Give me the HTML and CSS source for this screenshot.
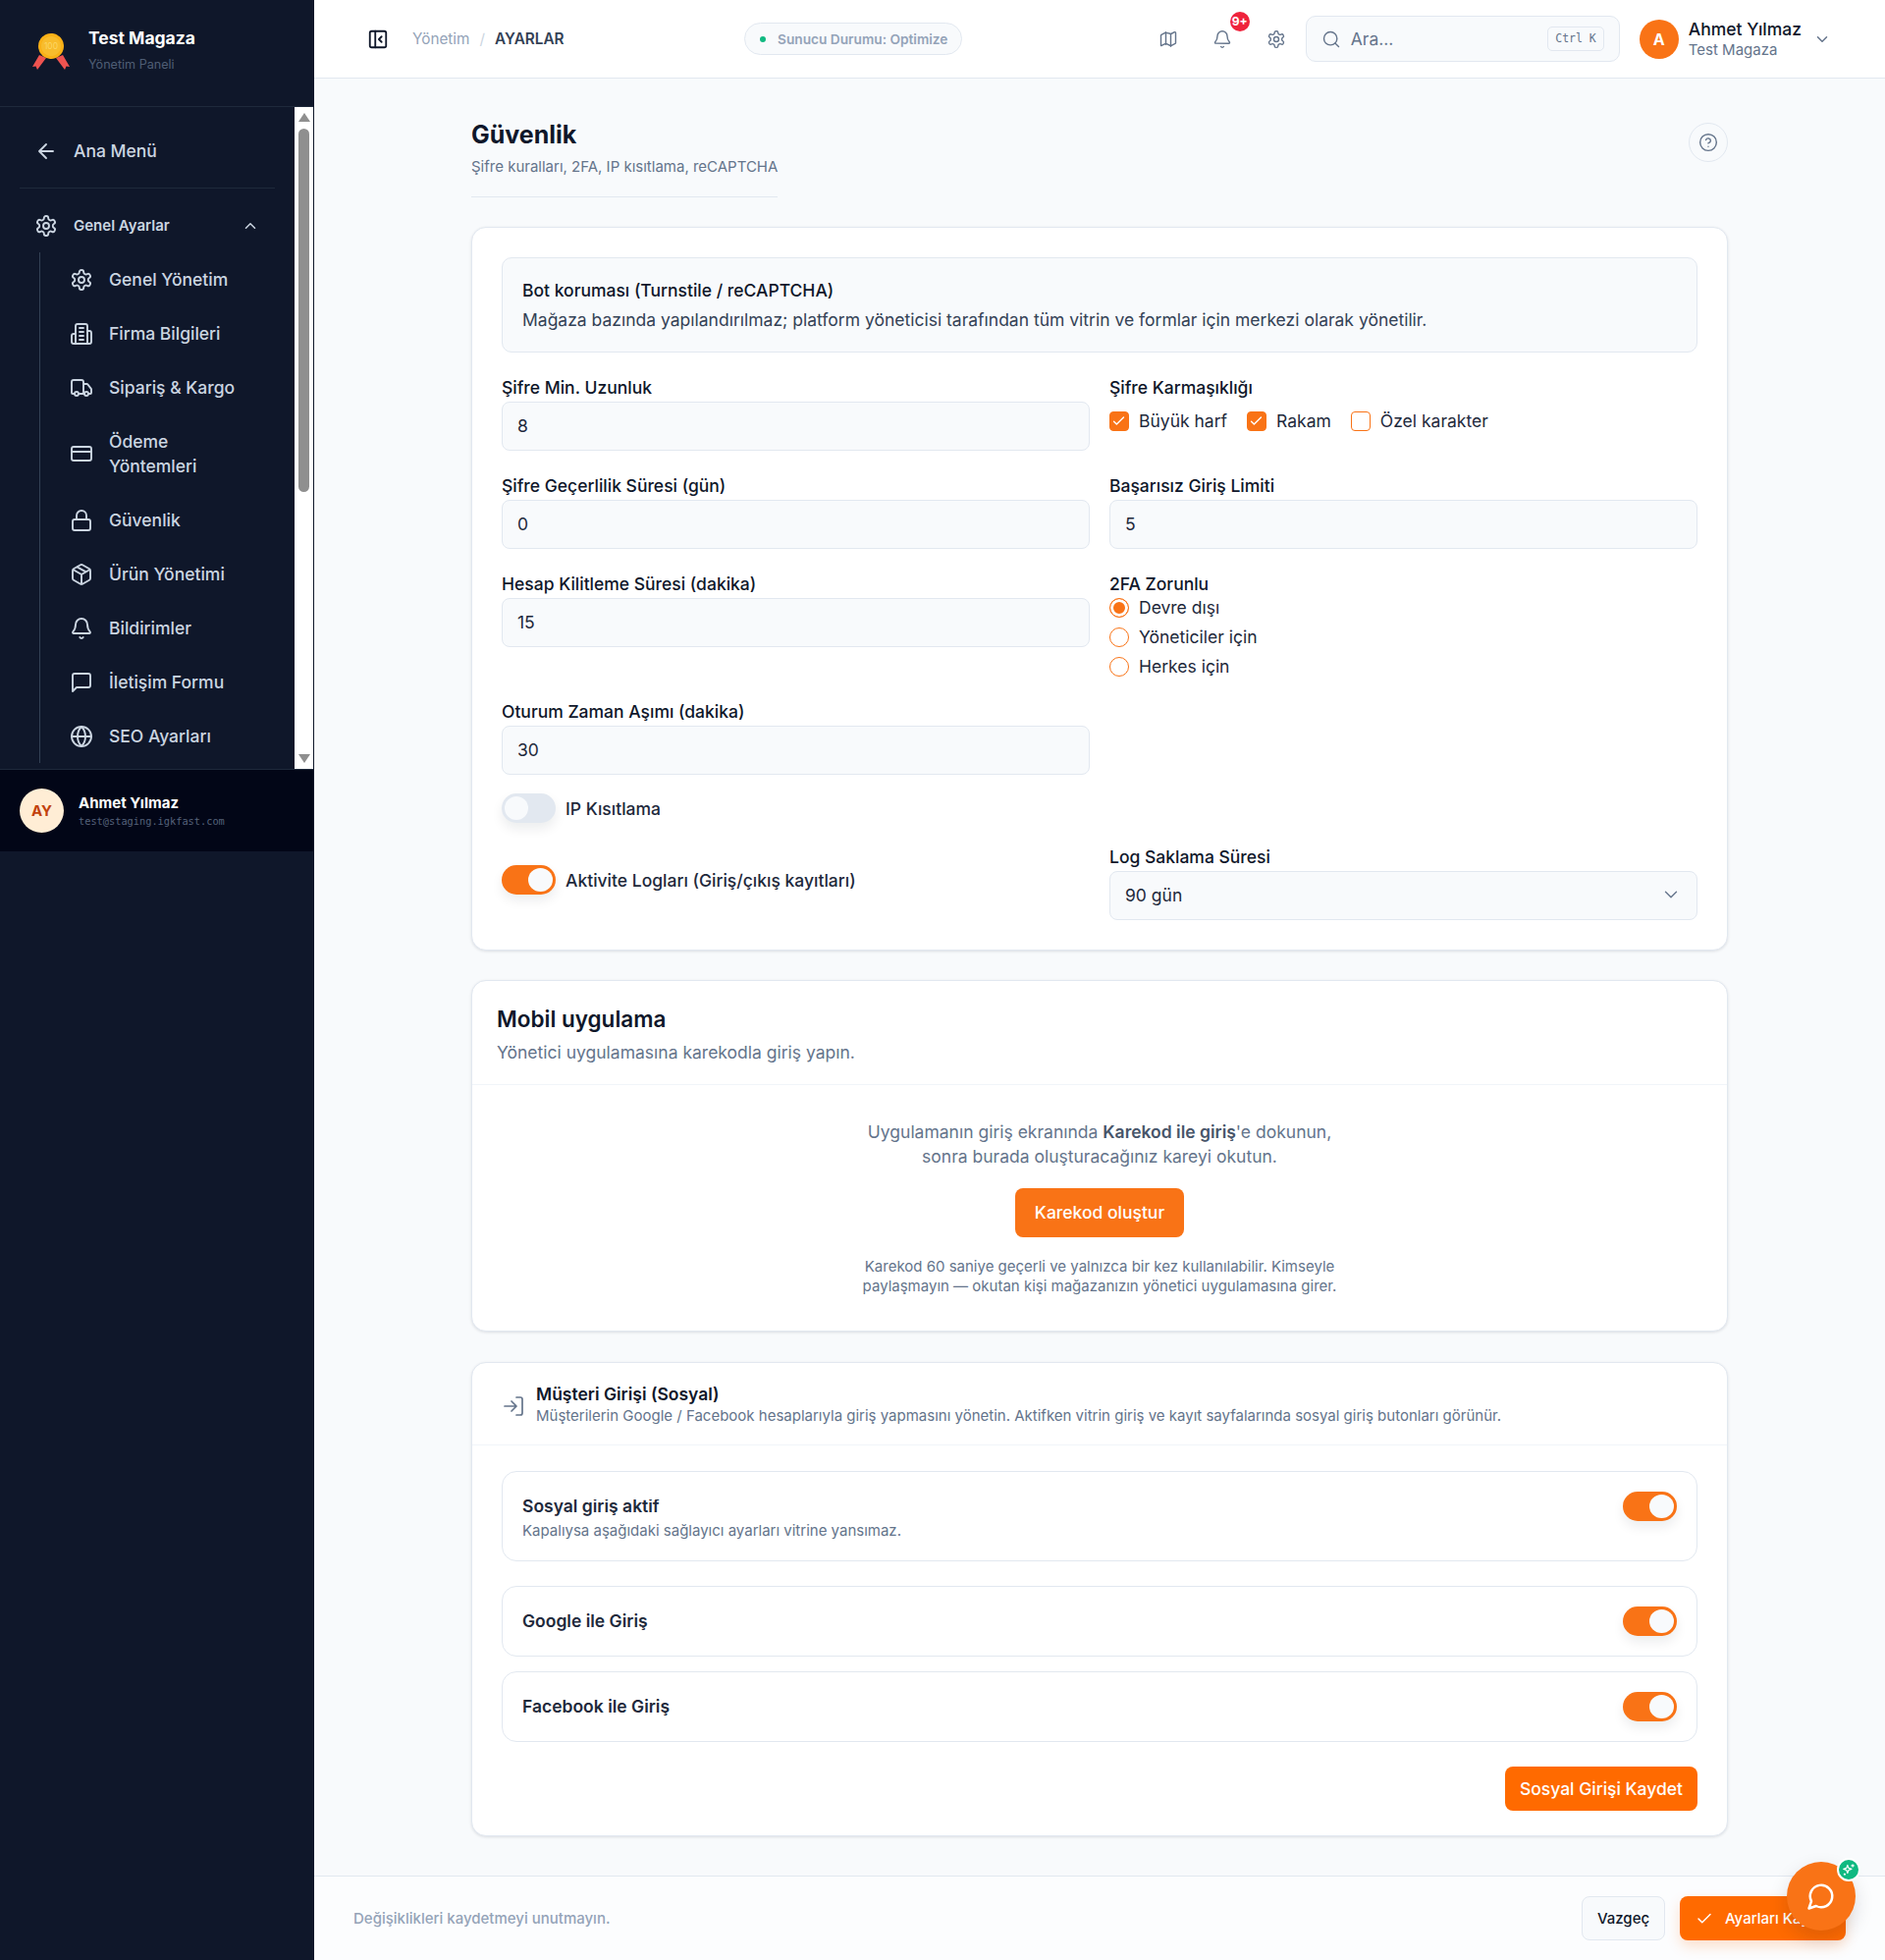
FILE: index.html
```html
<!DOCTYPE html>
<html lang="tr">
<head>
  <meta charset="UTF-8">
  <title>Güvenlik - Ayarlar</title>
  <link rel="stylesheet" href="styles.css">
</head>
<body>

<div class="app">

  <aside class="sidebar">
    <div class="side-panel">
      <div class="brand">
        <svg class="brand-logo" viewBox="0 0 44 44" width="44" height="44">
          <path d="M10 25 L17 28 L8 40 L6.500 36.500 L3 37Z" fill="#ef5350"/>
          <path d="M34 25 L27 28 L36 40 L37.500 36.500 L41 37Z" fill="#ef5350"/>
          <circle cx="22" cy="16" r="11.500" fill="#f8bc2c" stroke="#f9b017" stroke-width="3" stroke-dasharray="3.500 1.200"/>
          <text class="logo-text" x="22" y="19" text-anchor="middle">100</text>
        </svg>
        <div>
          <div class="brand-name">Test Magaza</div>
          <div class="brand-sub">Yönetim Paneli</div>
        </div>
      </div>

      <div class="side-scroll">
        <nav class="side-nav">
          <a class="back-link">
            <svg class="ic-side" viewBox="0 0 24 24"><path d="M19 12H5M12 19l-7-7 7-7"/></svg>
            Ana Menü
          </a>
          <div class="side-sep"></div>
          <div class="group-head">
            <svg class="ic-side" viewBox="0 0 24 24"><use href="#gear"/></svg>
            <span class="group-title">Genel Ayarlar</span>
            <svg class="group-chev" viewBox="0 0 24 24"><path d="M6 15l6-6 6 6"/></svg>
          </div>
          <div class="sub-list">
            <a class="sub-item"><svg class="ic-side" viewBox="0 0 24 24"><use href="#gear"/></svg>Genel Yönetim</a>
            <a class="sub-item"><svg class="ic-side" viewBox="0 0 24 24"><path d="M6 22V4a2 2 0 0 1 2-2h8a2 2 0 0 1 2 2v18ZM6 12H4a2 2 0 0 0-2 2v6a2 2 0 0 0 2 2h2M18 9h2a2 2 0 0 1 2 2v9a2 2 0 0 1-2 2h-2M10 6h4M10 10h4M10 14h4M10 18h4"/></svg>Firma Bilgileri</a>
            <a class="sub-item"><svg class="ic-side" viewBox="0 0 24 24"><path d="M14 18V6a2 2 0 0 0-2-2H4a2 2 0 0 0-2 2v11a1 1 0 0 0 1 1h2M15 18H9M19 18h2a1 1 0 0 0 1-1v-3.600a1 1 0 0 0-.2-.6l-3.500-4.400a1 1 0 0 0-.8-.4H14"/><circle cx="17" cy="18" r="2"/><circle cx="7" cy="18" r="2"/></svg>Sipariş &amp; Kargo</a>
            <a class="sub-item"><svg class="ic-side" viewBox="0 0 24 24"><rect x="2" y="5" width="20" height="14" rx="2"/><path d="M2 10h20"/></svg>Ödeme Yöntemleri</a>
            <a class="sub-item"><svg class="ic-side" viewBox="0 0 24 24"><rect x="3" y="11" width="18" height="11" rx="2"/><path d="M7 11V7a5 5 0 0 1 10 0v4"/></svg>Güvenlik</a>
            <a class="sub-item"><svg class="ic-side" viewBox="0 0 24 24"><path d="M21 8a2 2 0 0 0-1-1.700l-7-4a2 2 0 0 0-2 0l-7 4A2 2 0 0 0 3 8v8a2 2 0 0 0 1 1.700l7 4a2 2 0 0 0 2 0l7-4a2 2 0 0 0 1-1.700ZM12 22V12M3.300 7 12 12l8.700-5M7.500 4.300l9 5.100"/></svg>Ürün Yönetimi</a>
            <a class="sub-item"><svg class="ic-side" viewBox="0 0 24 24"><use href="#bell"/></svg>Bildirimler</a>
            <a class="sub-item"><svg class="ic-side" viewBox="0 0 24 24"><path d="M21 15a2 2 0 0 1-2 2H7l-4 4V5a2 2 0 0 1 2-2h14a2 2 0 0 1 2 2z"/></svg>İletişim Formu</a>
            <a class="sub-item"><svg class="ic-side" viewBox="0 0 24 24"><circle cx="12" cy="12" r="10"/><path d="M12 2a14.500 14.500 0 0 0 0 20 14.500 14.500 0 0 0 0-20M2 12h20"/></svg>SEO Ayarları</a>
          </div>
        </nav>
        <div class="fake-scrollbar">
          <span class="arrow-up"></span>
          <span class="thumb"></span>
          <span class="arrow-down"></span>
        </div>
      </div>

      <div class="side-user">
        <div class="side-avatar">AY</div>
        <div>
          <div class="side-user-name">Ahmet Yılmaz</div>
          <div class="side-user-mail">test@staging.igkfast.com</div>
        </div>
      </div>
    </div>
  </aside>

  <div class="main">
    <header class="topbar">
      <svg class="collapse-ic" viewBox="0 0 24 24"><rect x="3" y="3" width="18" height="18" rx="2"/><path d="M9 3v18M16 15l-3-3 3-3"/></svg>
      <div class="crumbs"><span class="crumb-muted">Yönetim</span><span class="crumb-slash">/</span><span class="crumb-cur">AYARLAR</span></div>
      <div class="status-pill"><span class="status-dot"></span>Sunucu Durumu: Optimize</div>
      <div class="top-icons">
        <svg class="ic-top" viewBox="0 0 24 24"><path d="M14.100 5.100a2 2 0 0 0 1.800 0l3.700-1.900A1 1 0 0 1 21 4.100v12.300a1 1 0 0 1-.6.9l-4.500 2.300a2 2 0 0 1-1.800 0l-4.200-2.100a2 2 0 0 0-1.800 0l-3.700 1.900A1 1 0 0 1 3 19.600V7.300a1 1 0 0 1 .6-.9l4.500-2.300a2 2 0 0 1 1.800 0zM15 5.800v15M9 3.200v15"/></svg>
        <div class="bell-wrap">
          <svg class="ic-top" viewBox="0 0 24 24"><use href="#bell"/></svg>
          <span class="bell-badge">9+</span>
        </div>
        <svg class="ic-top" viewBox="0 0 24 24"><use href="#gear"/></svg>
      </div>
      <div class="top-search">
        <svg class="ic-search" viewBox="0 0 24 24"><circle cx="11" cy="11" r="8"/><path d="m21 21-4.300-4.300"/></svg>
        <span class="search-text">Ara...</span>
        <span class="kbd">Ctrl K</span>
      </div>
      <div class="top-user">
        <div class="top-avatar">A</div>
        <div>
          <div class="top-user-name">Ahmet Yılmaz</div>
          <div class="top-user-shop">Test Magaza</div>
        </div>
        <svg class="top-chev" viewBox="0 0 24 24"><path d="m6 9 6 6 6-6"/></svg>
      </div>
    </header>

    <main class="content">
      <div class="page-head">
        <div>
          <h1>Güvenlik</h1>
          <p class="page-sub">Şifre kuralları, 2FA, IP kısıtlama, reCAPTCHA</p>
        </div>
        <button class="help-btn">
          <svg viewBox="0 0 24 24"><circle cx="12" cy="12" r="10"/><path d="M9.100 9a3 3 0 0 1 5.800 1c0 2-3 3-3 3M12 17h0"/></svg>
        </button>
      </div>

      <section class="card card-form">
        <div class="info-box">
          <div class="info-title">Bot koruması (Turnstile / reCAPTCHA)</div>
          <div>Mağaza bazında yapılandırılmaz; platform yöneticisi tarafından tüm vitrin ve formlar için merkezi olarak yönetilir.</div>
        </div>

        <div class="form-grid">
          <div class="field">
            <label>Şifre Min. Uzunluk</label>
            <input class="text-input" type="text" value="8">
          </div>
          <div class="field">
            <label>Şifre Karmaşıklığı</label>
            <div class="check-row">
              <span class="check-item"><span class="check on"><svg viewBox="0 0 24 24"><path d="M5 13l4 4L19 7"/></svg></span>Büyük harf</span>
              <span class="check-item"><span class="check on"><svg viewBox="0 0 24 24"><path d="M5 13l4 4L19 7"/></svg></span>Rakam</span>
              <span class="check-item"><span class="check"></span>Özel karakter</span>
            </div>
          </div>
          <div class="field">
            <label>Şifre Geçerlilik Süresi (gün)</label>
            <input class="text-input" type="text" value="0">
          </div>
          <div class="field">
            <label>Başarısız Giriş Limiti</label>
            <input class="text-input" type="text" value="5">
          </div>
          <div class="field">
            <label>Hesap Kilitleme Süresi (dakika)</label>
            <input class="text-input" type="text" value="15">
          </div>
          <div class="field field-radio">
            <label>2FA Zorunlu</label>
            <div class="radio-item"><span class="radio on"></span>Devre dışı</div>
            <div class="radio-item"><span class="radio"></span>Yöneticiler için</div>
            <div class="radio-item"><span class="radio"></span>Herkes için</div>
          </div>
          <div class="field">
            <label>Oturum Zaman Aşımı (dakika)</label>
            <input class="text-input" type="text" value="30">
          </div>
          <div class="field"></div>
        </div>

        <div class="toggle-line toggle-ip">
          <span class="toggle"></span>IP Kısıtlama
        </div>

        <div class="log-row">
          <div class="toggle-line">
            <span class="toggle on"></span>Aktivite Logları (Giriş/çıkış kayıtları)
          </div>
          <div class="field">
            <label>Log Saklama Süresi</label>
            <div class="select-box">90 gün
              <svg viewBox="0 0 24 24"><path d="m6 9 6 6 6-6"/></svg>
            </div>
          </div>
        </div>
      </section>

      <section class="card card-mobile">
        <div class="mobile-head">
          <h2>Mobil uygulama</h2>
          <p>Yönetici uygulamasına karekodla giriş yapın.</p>
        </div>
        <div class="mobile-body">
          <p class="mobile-lead">Uygulamanın giriş ekranında <b>Karekod ile giriş</b>'e dokunun,<br>sonra burada oluşturacağınız kareyi okutun.</p>
          <button class="btn-orange btn-qr">Karekod oluştur</button>
          <p class="mobile-note">Karekod 60 saniye geçerli ve yalnızca bir kez kullanılabilir. Kimseyle<br>paylaşmayın — okutan kişi mağazanızın yönetici uygulamasına girer.</p>
        </div>
      </section>

      <section class="card card-social">
        <div class="social-head">
          <svg viewBox="0 0 24 24"><path d="M15 3h4a2 2 0 0 1 2 2v14a2 2 0 0 1-2 2h-4M10 17l5-5-5-5M15 12H3"/></svg>
          <div>
            <h3>Müşteri Girişi (Sosyal)</h3>
            <p>Müşterilerin Google / Facebook hesaplarıyla giriş yapmasını yönetin. Aktifken vitrin giriş ve kayıt sayfalarında sosyal giriş butonları görünür.</p>
          </div>
        </div>
        <div class="social-body">
          <div class="social-item social-item-tall">
            <div>
              <div class="social-title">Sosyal giriş aktif</div>
              <div class="social-desc">Kapalıysa aşağıdaki sağlayıcı ayarları vitrine yansımaz.</div>
            </div>
            <span class="toggle on"></span>
          </div>
          <div class="social-item">
            <div class="social-title">Google ile Giriş</div>
            <span class="toggle on"></span>
          </div>
          <div class="social-item">
            <div class="social-title">Facebook ile Giriş</div>
            <span class="toggle on"></span>
          </div>
          <div class="social-actions">
            <button class="btn-orange btn-social">Sosyal Girişi Kaydet</button>
          </div>
        </div>
      </section>
    </main>

    <footer class="save-bar">
      <span class="save-note">Değişiklikleri kaydetmeyi unutmayın.</span>
      <button class="btn-cancel">Vazgeç</button>
      <button class="btn-orange btn-save">
        <svg viewBox="0 0 24 24"><path d="M20 6 9 17l-5-5"/></svg>
        Ayarları Kaydet
      </button>
    </footer>
  </div>
</div>

<button class="chat-fab">
  <svg viewBox="0 0 24 24"><path d="M7.900 20A9 9 0 1 0 4 16.100L2 22Z"/></svg>
  <span class="chat-badge">
    <svg viewBox="0 0 24 24"><path d="M10 4l1.800 5.200L17 11l-5.200 1.800L10 18l-1.800-5.200L3 11l5.200-1.800zM19 3v4M21 5h-4M5 19v2M6 20H4"/></svg>
  </span>
</button>

<!-- shared icons -->
<svg class="icon-defs" width="0" height="0">
  <defs>
    <g id="gear">
      <path d="M12.200 2h-.4a2 2 0 0 0-2 2v.2a2 2 0 0 1-1 1.700l-.4.3a2 2 0 0 1-2 0l-.2-.1a2 2 0 0 0-2.700.7l-.2.4a2 2 0 0 0 .7 2.700l.2.1a2 2 0 0 1 1 1.700v.5a2 2 0 0 1-1 1.800l-.2.1a2 2 0 0 0-.7 2.700l.2.4a2 2 0 0 0 2.700.7l.2-.1a2 2 0 0 1 2 0l.4.3a2 2 0 0 1 1 1.700v.2a2 2 0 0 0 2 2h.4a2 2 0 0 0 2-2v-.2a2 2 0 0 1 1-1.700l.4-.3a2 2 0 0 1 2 0l.2.1a2 2 0 0 0 2.700-.7l.2-.4a2 2 0 0 0-.7-2.700l-.2-.1a2 2 0 0 1-1-1.800v-.5a2 2 0 0 1 1-1.700l.2-.1a2 2 0 0 0 .7-2.700l-.2-.4a2 2 0 0 0-2.700-.7l-.2.1a2 2 0 0 1-2 0l-.4-.3a2 2 0 0 1-1-1.700V4a2 2 0 0 0-2-2z"/>
      <circle cx="12" cy="12" r="3"/>
    </g>
    <g id="bell">
      <path d="M10.300 21a2 2 0 0 0 3.400 0M3.300 15.300A1 1 0 0 0 4 17h16a1 1 0 0 0 .7-1.700C19.400 14 18 12.500 18 8A6 6 0 0 0 6 8c0 4.500-1.400 6-2.700 7.300"/>
    </g>
  </defs>
</svg>

</body>
</html>
```

FILE: styles.css
```css
* {
  box-sizing: border-box;
}
html, body {
  margin: 0;
  padding: 0;
}
body {
  font-family: Inter, "Noto Sans", sans-serif;
  background: #f8fafc;
  color: #0f172a;
  width: 1920px;
  height: 1996px;
  overflow: hidden;
  position: relative;
}
svg {
  fill: none;
  stroke: currentColor;
  stroke-width: 2;
  stroke-linecap: round;
  stroke-linejoin: round;
  flex-shrink: 0;
}
h1, h2, h3, p {
  margin: 0;
}
button,
input {
  font-family: inherit;
}
button {
  cursor: pointer;
}
.icon-defs {
  position: absolute;
}

.app {
  display: flex;
  height: 1996px;
}

/* sidebar */
.sidebar {
  width: 320px;
  flex-shrink: 0;
  background: #0f172a;
}
.side-panel {
  height: 867px;
  display: flex;
  flex-direction: column;
  width: 319px;
}
.brand {
  height: 109px;
  display: flex;
  align-items: center;
  gap: 16px;
  padding: 0 0 8px 30px;
  border-bottom: 1px solid #1e293b;
  flex-shrink: 0;
}
.brand-logo {
  stroke: none;
  width: 44px;
  height: 44px;
  margin-top: 6px;
}
.logo-text {
  font-size: 8.500px;
  fill: #fcd663;
  stroke: none;
}
.brand-name {
  font-size: 17.500px;
  font-weight: 700;
  color: #fff;
  line-height: 24px;
}
.brand-sub {
  font-size: 12.600px;
  color: #4f5e75;
  margin-top: 7px;
  line-height: 16px;
}
.side-scroll {
  flex: 1;
  display: flex;
  min-height: 0;
}
.side-nav {
  flex: 1;
  padding: 17px 20px 0;
  min-width: 0;
  overflow: hidden;
}
.fake-scrollbar {
  width: 19px;
  background: #fff;
  display: flex;
  flex-direction: column;
  align-items: center;
  padding-top: 6px;
}
.thumb {
  width: 11px;
  height: 370px;
  background: #8f8f8f;
  border-radius: 6px;
  margin-top: 7px;
}
.arrow-up {
  width: 0;
  height: 0;
  border-left: 6px solid transparent;
  border-right: 6px solid transparent;
  border-bottom: 9px solid #8f8f8f;
}
.arrow-down {
  width: 0;
  height: 0;
  border-left: 6px solid transparent;
  border-right: 6px solid transparent;
  border-top: 9px solid #8f8f8f;
  margin-top: auto;
  margin-bottom: 6px;
}
.ic-side {
  width: 24px;
  height: 24px;
  color: #cbd5e1;
  stroke-width: 1.900;
}
.back-link {
  display: flex;
  align-items: center;
  gap: 16px;
  height: 55px;
  padding-left: 15px;
  font-size: 17.500px;
  font-weight: 500;
  color: #cbd5e1;
}
.side-sep {
  height: 1px;
  background: #1e293b;
  margin-top: 10px;
}
.group-head {
  display: flex;
  align-items: center;
  gap: 16px;
  height: 55px;
  margin-top: 10px;
  padding-left: 15px;
}
.group-title {
  font-size: 15px;
  font-weight: 600;
  color: #cbd5e1;
  flex: 1;
}
.group-chev {
  width: 18px;
  height: 18px;
  color: #cbd5e1;
  margin-right: 16px;
}
.sub-list {
  margin-left: 20px;
  padding-left: 30px;
  border-left: 1px solid #334155;
  padding-right: 20px;
}
.sub-item {
  display: flex;
  align-items: center;
  gap: 16px;
  padding: 15px 0;
  font-size: 17.500px;
  line-height: 25px;
  font-weight: 500;
  color: #cbd5e1;
}
.side-user {
  height: 84px;
  background: #020617;
  border-top: 1px solid #1e293b;
  display: flex;
  align-items: center;
  gap: 15px;
  padding-left: 20px;
  flex-shrink: 0;
}
.side-avatar {
  width: 45px;
  height: 45px;
  border-radius: 50%;
  background: #ffedd5;
  color: #c2410c;
  font-size: 15px;
  font-weight: 700;
  display: flex;
  align-items: center;
  justify-content: center;
}
.side-user-name {
  font-size: 15px;
  font-weight: 700;
  color: #fff;
  line-height: 20px;
}
.side-user-mail {
  font-family: "DejaVu Sans Mono", monospace;
  font-size: 10.300px;
  color: #55627a;
  line-height: 14px;
  margin-top: 1px;
}

/* top bar */
.main {
  flex: 1;
  min-width: 0;
  display: flex;
  flex-direction: column;
}
.topbar {
  height: 80px;
  background: #fff;
  border-bottom: 1px solid #e2e8f0;
  display: flex;
  align-items: center;
  padding: 0 55px 0 54px;
  flex-shrink: 0;
}
.collapse-ic {
  width: 22px;
  height: 22px;
  color: #0f172a;
}
.crumbs {
  display: flex;
  align-items: center;
  font-size: 15.300px;
  margin-left: 24px;
  width: 338px;
}
.crumb-muted {
  color: #94a3b8;
}
.crumb-slash {
  color: #cbd5e1;
  margin: 0 10px;
}
.crumb-cur {
  font-weight: 600;
  color: #334155;
}
.status-pill {
  display: flex;
  align-items: center;
  gap: 12px;
  height: 33px;
  padding: 0 14px 0 15px;
  background: #f8fafc;
  border: 1px solid #e2e8f0;
  border-radius: 17px;
  font-size: 13.700px;
  font-weight: 600;
  color: #94a3b8;
}
.status-dot {
  width: 6px;
  height: 6px;
  border-radius: 50%;
  background: #10b981;
}
.top-icons {
  display: flex;
  align-items: center;
  gap: 35px;
  margin-left: auto;
}
.ic-top {
  width: 20px;
  height: 20px;
  color: #64748b;
  display: block;
  stroke-width: 1.700;
}
.bell-wrap {
  position: relative;
}
.bell-badge {
  position: absolute;
  top: -18px;
  right: -18px;
  width: 20px;
  height: 20px;
  border-radius: 50%;
  background: #ef233c;
  color: #fff;
  font-size: 12px;
  font-weight: 700;
  display: flex;
  align-items: center;
  justify-content: center;
}
.top-search {
  width: 320px;
  height: 47px;
  margin-left: 20px;
  background: #f8fafc;
  border: 1px solid #e2e8f0;
  border-radius: 10px;
  display: flex;
  align-items: center;
  padding: 0 15px;
}
.ic-search {
  width: 20px;
  height: 20px;
  color: #64748b;
  stroke-width: 1.700;
}
.search-text {
  font-size: 17.500px;
  color: #64748b;
  margin-left: 10px;
  flex: 1;
}
.kbd {
  font-family: "DejaVu Sans Mono", monospace;
  font-size: 11.500px;
  color: #64748b;
  height: 25px;
  line-height: 23px;
  padding: 0 7px;
  background: #f8fafc;
  border: 1px solid #e2e8f0;
  border-radius: 5px;
}
.top-user {
  display: flex;
  align-items: center;
  margin-left: 20px;
}
.top-avatar {
  width: 40px;
  height: 40px;
  border-radius: 50%;
  background: #f97316;
  color: #fff;
  font-size: 16px;
  font-weight: 700;
  display: flex;
  align-items: center;
  justify-content: center;
  margin-right: 10px;
}
.top-user-name {
  font-size: 17.500px;
  font-weight: 500;
  color: #0f172a;
  line-height: 23px;
}
.top-user-shop {
  font-size: 15px;
  color: #64748b;
  line-height: 20px;
}
.top-chev {
  width: 18px;
  height: 18px;
  color: #64748b;
  margin-left: 12px;
}

/* page */
.content {
  flex: 1;
  padding: 40px 160px 0;
  min-height: 0;
}
.page-head {
  display: flex;
  justify-content: space-between;
  align-items: flex-start;
  height: 111px;
}
.page-head h1 {
  font-size: 25px;
  font-weight: 700;
  line-height: 34px;
  color: #0f172a;
}
.page-sub {
  font-size: 15px;
  color: #64748b;
  line-height: 22px;
  margin-top: 5px;
  padding-bottom: 19px;
  border-bottom: 1px solid #e2e8f0;
}
.help-btn {
  width: 40px;
  height: 40px;
  margin-top: 5px;
  border-radius: 50%;
  border: 1px solid #e2e8f0;
  background: #f8fafc;
  padding: 0;
  color: #64748b;
  display: flex;
  align-items: center;
  justify-content: center;
}
.help-btn svg {
  width: 20px;
  height: 20px;
  stroke-width: 1.700;
}
.card {
  background: #fff;
  border: 1px solid #e2e8f0;
  border-radius: 15px;
  box-shadow: 0 1px 3px rgba(15, 23, 42, 0.12);
}
.card-form {
  padding: 30px;
  height: 737px;
}
.info-box {
  background: #f8fafc;
  border: 1px solid #e2e8f0;
  border-radius: 10px;
  padding: 18px 20px 0;
  font-size: 17.500px;
  line-height: 29.500px;
  color: #334155;
  height: 97px;
}
.info-title {
  color: #0f172a;
  font-weight: 500;
}
.form-grid {
  display: grid;
  grid-template-columns: 1fr 1fr;
  gap: 0 20px;
  margin-top: 24px;
}
.field {
  height: 100px;
}
.field-radio {
  height: 130px;
}
.field label {
  display: block;
  font-size: 17.500px;
  font-weight: 500;
  line-height: 24px;
  color: #0f172a;
  height: 24px;
  margin-bottom: 2px;
}
.text-input,
.select-box {
  width: 100%;
  height: 50px;
  background: #f8fafc;
  border: 1px solid #e2e8f0;
  border-radius: 8px;
  padding: 0 15px 2px;
  font-family: inherit;
  font-size: 17.500px;
  color: #1e293b;
}
.select-box {
  display: flex;
  align-items: center;
  justify-content: space-between;
}
.select-box svg {
  width: 22px;
  height: 22px;
  color: #64748b;
  stroke-width: 1.500;
}
.check-row {
  display: flex;
  gap: 20px;
  margin-top: 10px;
}
.check-item {
  display: flex;
  align-items: center;
  gap: 10px;
  font-size: 17.500px;
  color: #1e293b;
  line-height: 24px;
}
.check {
  width: 20px;
  height: 20px;
  border: 1.500px solid #f97316;
  border-radius: 4px;
  background: #fff;
  display: block;
}
.check.on {
  background: #f97316;
}
.check svg {
  display: block;
  width: 17px;
  height: 17px;
  color: #fff;
  stroke-width: 2;
}
.radio-item {
  display: flex;
  align-items: center;
  gap: 10px;
  font-size: 17.500px;
  line-height: 24px;
  height: 30px;
  color: #1e293b;
}
.field-radio label {
  height: 21px;
  margin-bottom: 0;
}
.radio {
  width: 20px;
  height: 20px;
  border: 1.500px solid #f97316;
  border-radius: 50%;
  background: #fff;
  display: block;
}
.radio.on {
  box-shadow: inset 0 0 0 3px #fff;
  background: #f97316;
}
.toggle-line {
  display: flex;
  align-items: center;
  gap: 10px;
  font-size: 17.500px;
  font-weight: 500;
  color: #1e293b;
  height: 30px;
}
.toggle-ip {
  margin-top: -5px;
}
.toggle {
  position: relative;
  width: 55px;
  height: 30px;
  border-radius: 15px;
  background: #e2e8f0;
  display: block;
  flex-shrink: 0;
  box-shadow: 0 6px 12px rgba(15, 23, 42, 0.08);
}
.toggle::after {
  content: "";
  position: absolute;
  left: 3px;
  top: 3px;
  width: 24px;
  height: 24px;
  border-radius: 50%;
  background: #f8fafc;
}
.toggle.on {
  background: #f97316;
}
.toggle.on::after {
  left: 27px;
  width: 25px;
}
.log-row {
  display: grid;
  grid-template-columns: 1fr 1fr;
  gap: 0 20px;
  margin-top: 23px;
  align-items: start;
}
.log-row .toggle-line {
  margin-top: 20px;
}

/* mobile card */
.card-mobile {
  margin-top: 30px;
  height: 358px;
}
.mobile-head {
  height: 106px;
  padding: 23px 25px 0;
  border-bottom: 1px solid #f1f5f9;
}
.mobile-head h2 {
  font-size: 22.500px;
  font-weight: 600;
  line-height: 32px;
  color: #0f172a;
}
.mobile-head p {
  font-size: 17.500px;
  color: #64748b;
  line-height: 26px;
  margin-top: 5px;
}
.mobile-body {
  text-align: center;
  padding-top: 35px;
}
.mobile-lead {
  font-size: 17.500px;
  line-height: 25px;
  color: #64748b;
}
.mobile-lead b {
  font-weight: 600;
  color: #475569;
}
.btn-orange {
  background: #ff6a00;
  color: #fff;
  border: 0;
  border-radius: 8px;
  font-weight: 500;
}
.btn-qr {
  width: 172px;
  height: 50px;
  font-size: 17.500px;
  margin-top: 20px;
  padding-bottom: 2px;
  display: inline-block;
  background: #f97316;
}
.mobile-note {
  font-size: 15px;
  line-height: 20px;
  color: #64748b;
  margin-top: 20px;
}

/* social card */
.card-social {
  margin-top: 31px;
  height: 483px;
}
.social-head {
  height: 84px;
  display: flex;
  align-items: center;
  gap: 11px;
  padding: 0 25px 2px 30px;
  border-bottom: 1px solid #f1f5f9;
}
.social-head svg {
  width: 24px;
  height: 24px;
  color: #64748b;
  stroke-width: 1.700;
  margin-top: 7px;
}
.social-head h3 {
  font-size: 17.500px;
  font-weight: 600;
  line-height: 24px;
  color: #0f172a;
  padding-top: 2px;
}
.social-head p {
  font-size: 15px;
  line-height: 20px;
  color: #64748b;
}
.social-body {
  padding: 26px 30px 0;
}
.social-item {
  height: 72px;
  border: 1px solid #e2e8f0;
  border-radius: 15px;
  padding: 0 20px;
  display: flex;
  align-items: center;
  justify-content: space-between;
  margin-bottom: 15px;
}
.social-item-tall {
  height: 92px;
  margin-bottom: 25px;
  align-items: flex-start;
  padding-top: 28px;
}
.social-item-tall .toggle {
  margin-top: -8px;
}
.social-title {
  font-size: 17.500px;
  font-weight: 600;
  line-height: 24px;
  color: #1e293b;
}
/* the title line is too short in the original, the tops of the letters get cut */
.social-item-tall .social-title {
  line-height: 13px;
  height: 18px;
  overflow: hidden;
}
.social-desc {
  font-size: 15px;
  line-height: 20px;
  color: #64748b;
  margin-top: 4px;
}
.social-actions {
  display: flex;
  justify-content: flex-end;
  margin-top: 25px;
}
.btn-social {
  width: 196px;
  height: 45px;
  font-size: 17.500px;
}

/* bottom save bar */
.save-bar {
  height: 86px;
  flex-shrink: 0;
  background: #fcfdfe;
  border-top: 1px solid #e2e8f0;
  display: flex;
  align-items: center;
  padding: 0 40px;
}
.save-note {
  font-size: 15px;
  font-weight: 500;
  color: #94a3b8;
  flex: 1;
}
.btn-cancel {
  width: 85px;
  height: 45px;
  background: #f8fafc;
  border: 1px solid #e2e8f0;
  border-radius: 8px;
  font-size: 15px;
  font-weight: 500;
  color: #0f172a;
}
.btn-save {
  width: 169px;
  height: 45px;
  margin-left: 15px;
  font-size: 15px;
  display: flex;
  align-items: center;
  gap: 12px;
  padding: 0 16px;
  white-space: nowrap;
  overflow: hidden;
  box-shadow: 0 6px 14px rgba(255, 106, 0, 0.2);
}
.btn-save svg {
  width: 18px;
  height: 18px;
}

/* floating chat */
.chat-fab {
  position: absolute;
  left: 1820px;
  top: 1896px;
  width: 70px;
  height: 70px;
  border-radius: 50%;
  border: 0;
  padding: 0;
  background: #f97316;
  color: #fff;
  box-shadow: 0 8px 20px rgba(15, 23, 42, 0.14);
  display: flex;
  align-items: center;
  justify-content: center;
}
.chat-fab > svg {
  width: 30px;
  height: 30px;
}
.chat-badge {
  position: absolute;
  top: -4px;
  right: -5px;
  width: 24px;
  height: 24px;
  border-radius: 50%;
  background: #10b981;
  border: 2px solid #fff;
  display: flex;
  align-items: center;
  justify-content: center;
}
.chat-badge svg {
  width: 14px;
  height: 14px;
  stroke-width: 2;
}
```
